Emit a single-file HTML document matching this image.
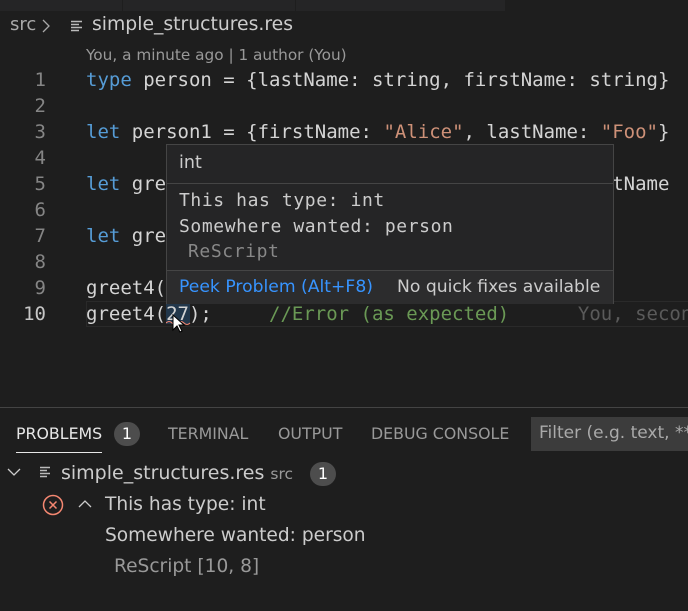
<!DOCTYPE html>
<html><head><style>
body{margin:0;width:688px;height:611px;background:#1e1e1e;overflow:hidden;position:relative;font-family:"DejaVu Sans",sans-serif;color:#ccc}
.a{position:absolute;white-space:pre}
.m{font-family:"DejaVu Sans Mono","Liberation Mono",monospace;font-size:19px}
.ln{color:#858585;width:46px;text-align:right;left:0}
.k{color:#569cd6}.s{color:#ce9178}.c{color:#6a9955}
</style></head><body>
<div class="a" style="left:0;top:0;width:688px;height:11px;background:#252526"></div>
<div class="a" style="left:122px;top:0;width:1px;height:11px;background:#1e1e1e"></div>
<div class="a" style="left:295px;top:0;width:1px;height:11px;background:#1e1e1e"></div>
<div class="a" style="left:505px;top:0;width:183px;height:11px;background:#1e1e1e"></div>
<div class="a" style="left:10px;top:14px;font-size:18px;color:#a9a9a9">src</div>
<svg class="a" style="left:41px;top:19px" width="10" height="14"><path d="M2 1l6 6-6 6" stroke="#a9a9a9" fill="none" stroke-width="1.3"/></svg>
<svg class="a" style="left:70px;top:20px" width="14" height="14"><path d="M1 1.5h11M1 4.5h8M1 7.5h11M1 10.5h8" stroke="#bbb" stroke-width="1.5"/></svg>
<div class="a" style="left:92px;top:14px;font-size:18.8px;color:#ccc">simple_structures.res</div>
<div class="a" style="left:86px;top:46px;font-size:15.3px;color:#999">You, a minute ago | 1 author (You)</div>
<div class="a" style="left:86px;top:301px;width:602px;height:24px;border:1px solid #2a2a2a;background:#1e1e1e"></div>
<div class="a m ln" style="top:69px">1</div><div class="a m" style="left:86px;top:69px;color:#d4d4d4"><span class="k">type</span> person = {lastName: string, firstName: string}</div>
<div class="a m ln" style="top:95px">2</div>
<div class="a m ln" style="top:121px">3</div><div class="a m" style="left:86px;top:121px;color:#d4d4d4"><span class="k">let</span> person1 = {firstName: <span class="s">"Alice"</span>, lastName: <span class="s">"Foo"</span>}</div>
<div class="a m ln" style="top:147px">4</div>
<div class="a m ln" style="top:173px">5</div><div class="a m" style="left:86px;top:173px;color:#d4d4d4"><span class="k">let</span> greet                                     tName</div>
<div class="a m ln" style="top:199px">6</div>
<div class="a m ln" style="top:225px">7</div><div class="a m" style="left:86px;top:225px;color:#d4d4d4"><span class="k">let</span> gre</div>
<div class="a m ln" style="top:251px">8</div>
<div class="a m ln" style="top:277px">9</div><div class="a m" style="left:86px;top:277px;color:#d4d4d4">greet4(</div>
<div class="a m ln" style="top:303px;color:#c6c6c6">10</div>
<div class="a" style="left:166px;top:304px;width:24px;height:20px;background:#264f78;opacity:.5"></div>
<div class="a m" style="left:86px;top:303px;color:#d4d4d4">greet4(27);     <span class="c">//Error (as expected)</span>      <span style="color:#5a5a5a">You, second</span></div>
<svg class="a" style="left:166px;top:320px" width="26" height="6"><path d="M0 3q3-3 6 0t6 0 6 0 6 0" stroke="#f48771" fill="none"/></svg>
<svg class="a" style="left:172px;top:314px" width="14" height="20"><path d="M1 1v15l4-4 3 6 2-1-3-6h5z" fill="#fff" stroke="#000"/></svg>
<div class="a" style="left:166px;top:144px;width:446px;height:158px;background:#252526;border:1px solid #454545">
<div class="a" style="left:12px;top:8px;font-size:17.5px;color:#ccc">int</div>
<div class="a" style="left:0;top:38px;width:446px;height:1px;background:#454545"></div>
<div class="a m" style="left:12px;top:45px;font-size:18px;letter-spacing:0.6px;color:#ccc">This has type: int</div>
<div class="a m" style="left:12px;top:71px;font-size:18px;letter-spacing:0.6px;color:#ccc">Somewhere wanted: person</div>
<div class="a m" style="left:21px;top:96px;font-size:18px;letter-spacing:0.6px;color:#888">ReScript</div>
<div class="a" style="left:0;top:125px;width:446px;height:33px;background:#2c2c2d;border-top:1px solid #454545"></div>
<div class="a" style="left:12px;top:132px;font-size:17.2px;color:#3794ff">Peek Problem (Alt+F8)</div>
<div class="a" style="left:230px;top:132px;font-size:17.2px;color:#ccc">No quick fixes available</div>
</div>
<div class="a" style="left:0;top:407px;width:688px;height:1px;background:#444"></div>
<div class="a" style="left:16px;top:424px;font-size:15.8px;color:#e7e7e7">PROBLEMS</div>
<div class="a" style="left:16px;top:452px;width:86px;height:1px;background:#e7e7e7"></div>
<div class="a" style="left:114px;top:422px;width:26px;height:24px;border-radius:12px;background:#4d4d4d;color:#fff;font-size:16px;text-align:center;line-height:24px">1</div>
<div class="a" style="left:168px;top:424px;font-size:15.8px;color:#999">TERMINAL</div>
<div class="a" style="left:278px;top:424px;font-size:15.8px;color:#999">OUTPUT</div>
<div class="a" style="left:371px;top:424px;font-size:15.8px;color:#999">DEBUG CONSOLE</div>
<div class="a" style="left:531px;top:417px;width:157px;height:34px;background:#3c3c3c"></div>
<div class="a" style="left:539px;top:423px;font-size:17px;color:#aaa">Filter (e.g. text, **</div>
<svg class="a" style="left:7px;top:467px" width="14" height="10"><path d="M1 2l6 6 6-6" stroke="#ccc" fill="none" stroke-width="1.3"/></svg>
<svg class="a" style="left:40px;top:466px" width="12" height="12"><path d="M0 1.5h10M0 4.5h7M0 7.5h10M0 10.5h7" stroke="#bbb" stroke-width="1.5"/></svg>
<div class="a" style="left:61px;top:462px;font-size:19px;color:#ccc">simple_structures.res <span style="font-size:15.5px;color:#999">src</span></div>
<div class="a" style="left:310px;top:462px;width:26px;height:24px;border-radius:12px;background:#4d4d4d;color:#fff;font-size:16px;text-align:center;line-height:24px">1</div>
<svg class="a" style="left:42px;top:494px" width="22" height="22"><circle cx="11" cy="11" r="9.5" stroke="#f48771" fill="none" stroke-width="1.5"/><path d="M7.5 7.5l7 7M14.5 7.5l-7 7" stroke="#f48771" stroke-width="1.5"/></svg>
<svg class="a" style="left:77px;top:498px" width="16" height="12"><path d="M2 9l6-6 6 6" stroke="#ccc" fill="none" stroke-width="1.3"/></svg>
<div class="a" style="left:105px;top:494px;font-size:18.6px;color:#ccc">This has type: int</div>
<div class="a" style="left:105px;top:525px;font-size:18.6px;color:#ccc">Somewhere wanted: person</div>
<div class="a" style="left:114px;top:556px;font-size:18.6px;color:#999">ReScript [10, 8]</div>
</body></html>
